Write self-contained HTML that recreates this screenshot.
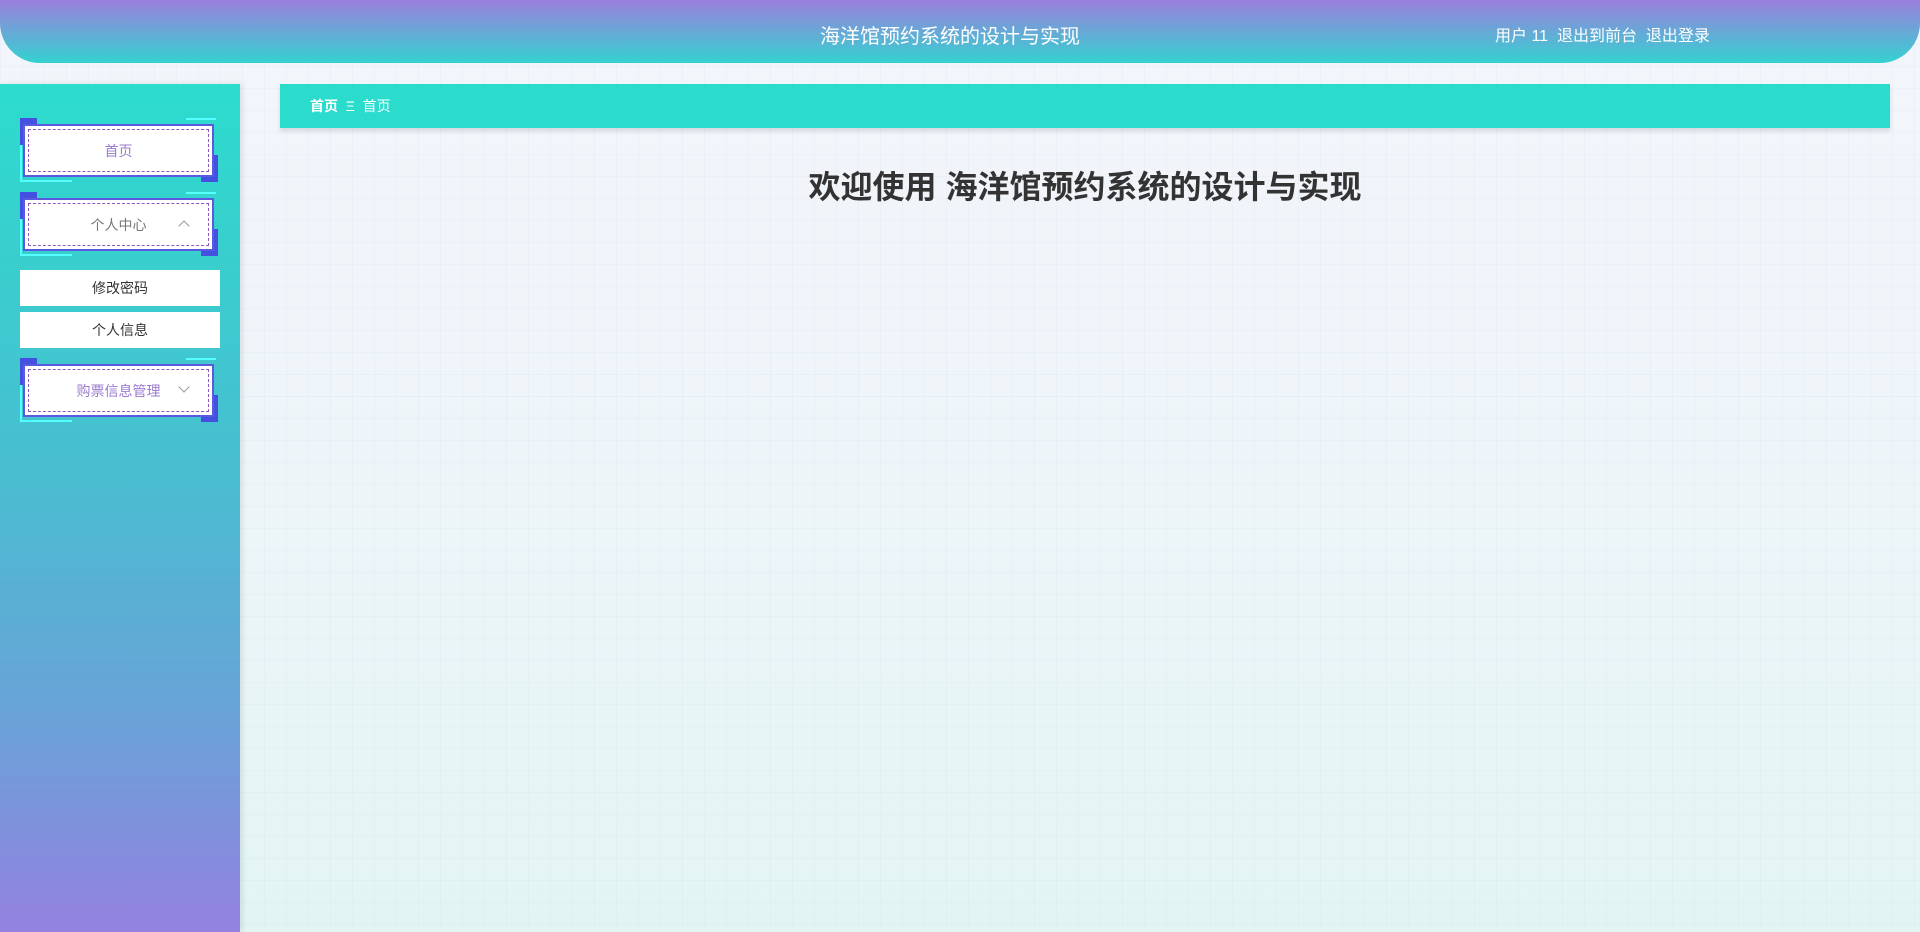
<!DOCTYPE html>
<html><head><meta charset="utf-8"><style>
*{margin:0;padding:0;box-sizing:border-box}
body{width:1920px;height:932px;overflow:hidden;font-family:"Liberation Sans","Noto Sans CJK SC",sans-serif;background:linear-gradient(180deg,#f3f5fb 0%,#eef5f8 50%,#e2f5f3 100%);position:relative}
.grid{position:absolute;inset:0;background-image:linear-gradient(rgba(200,215,225,.14) 1px,transparent 1px),linear-gradient(90deg,rgba(200,215,225,.14) 1px,transparent 1px);background-size:22px 22px}
.hdr{position:absolute;left:0;top:0;width:1920px;height:63px;border-radius:0 0 40px 40px;background:linear-gradient(180deg,#9b7fdc 0%,#72a0d8 40%,#34d2d0 100%)}
.title{position:absolute;left:0;width:1900px;top:20px;text-align:center;color:#fff;font-size:20px}
.user{position:absolute;left:1495px;top:22px;color:#fff;font-size:16px}
.side{position:absolute;left:0;top:84px;width:240px;height:848px;background:linear-gradient(180deg,#2cdccd 0%,#48bed0 45%,#6aa2d8 75%,#9481e0 100%);box-shadow:2px 0 6px rgba(0,0,0,.1)}
.item{position:absolute;left:20px;width:198px;height:64px}
.item .c1{position:absolute;left:0;top:0;width:17px;height:27px;background:#4450e0}
.item .c2{position:absolute;right:0;bottom:0;width:17px;height:27px;background:#4450e0}
.item .box{position:absolute;left:3px;top:6px;width:191px;height:53px;background:#fff;border:2px solid #5a5ae0}
.item .in{position:absolute;inset:3px;border:1px dashed #8a5ac0;display:flex;align-items:center;justify-content:center;color:#9a7ad0;font-size:14px}
.item .ln{position:absolute;left:0;top:20px;width:2px;height:44px;background:#5ff}
.item .ln2{position:absolute;left:0;bottom:0;width:52px;height:2px;background:#5ff}
.item .ln3{position:absolute;right:2px;top:0;width:30px;height:2px;background:#5ff}
.up,.dn{position:absolute;right:24px;width:8px;height:8px;border-left:1px solid #999;border-top:1px solid #999}
.up{top:22px;transform:rotate(45deg)}
.dn{top:17px;transform:rotate(225deg)}
.sub{position:absolute;left:20px;width:200px;height:36px;background:#fff;color:#333;font-size:14px;text-align:center;line-height:36px}
.bc{position:absolute;left:280px;top:84px;width:1610px;height:44px;background:#2bdccd;box-shadow:0 3px 4px rgba(0,0,0,.12);color:#fff;font-size:14px;line-height:44px;padding-left:30px}
.wel{position:absolute;left:280px;width:1610px;top:162px;text-align:center;font-size:32px;font-weight:bold;color:#333}
</style></head><body>
<div class="grid"></div>
<div class="hdr"><div class="title">海洋馆预约系统的设计与实现</div><div class="user">用户 11&nbsp; 退出到前台&nbsp; 退出登录</div></div>
<div class="side">
<div class="item" style="top:34px"><div class="ln"></div><div class="ln2"></div><div class="ln3"></div><div class="c1"></div><div class="c2"></div><div class="box"><div class="in">首页</div></div></div>
<div class="item" style="top:108px"><div class="ln"></div><div class="ln2"></div><div class="ln3"></div><div class="c1"></div><div class="c2"></div><div class="box"><div class="in" style="color:#777">个人中心</div><span class="up"></span></div></div>
<div class="sub" style="top:186px">修改密码</div>
<div class="sub" style="top:228px">个人信息</div>
<div class="item" style="top:274px"><div class="ln"></div><div class="ln2"></div><div class="ln3"></div><div class="c1"></div><div class="c2"></div><div class="box"><div class="in">购票信息管理</div><span class="dn"></span></div></div>
</div>
<div class="bc"><b>首页</b>&nbsp;&nbsp;Ξ&nbsp;&nbsp;首页</div>
<div class="wel">欢迎使用 海洋馆预约系统的设计与实现</div>
</body></html>
